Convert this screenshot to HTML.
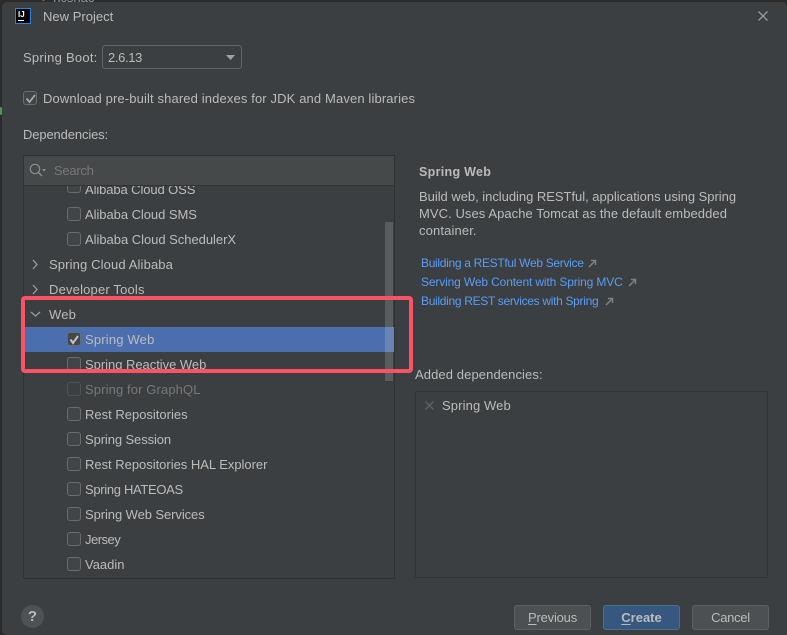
<!DOCTYPE html>
<html><head><meta charset="utf-8">
<style>
html,body{margin:0;padding:0}
body{width:787px;height:635px;overflow:hidden;background:#2b2b2b;position:relative;font-family:"Liberation Sans","Noto Sans CJK SC",sans-serif;font-size:13px;color:#bbbbbb}
#d{position:absolute;left:2px;top:2px;width:785px;height:633px;background:#3c3f41;border-radius:5px 5px 0 5px}
.t{position:absolute;white-space:nowrap;line-height:18px;height:18px}
.r{left:85px}
.c{position:absolute;left:67px;width:12px;height:12px;border:1px solid #6b6b6b;background:#414547;border-radius:3px}
.a{position:absolute;left:0;top:0}
.l{color:#589df6;left:421px;font-size:12px;letter-spacing:-.31px}
.b{position:absolute;top:605px;height:23px;border:1px solid #5e6060;background:#4c5052;border-radius:3px;text-align:center;line-height:23px;color:#bbb}
u{text-underline-offset:2px}
</style></head><body>
<div class="t" style="left:42px;top:-11px;color:#999">&gt; ncsnac</div>
<div style="position:absolute;left:0;top:107px;width:3px;height:8px;background:#4f9a4a;border-radius:0 4px 4px 0"></div>
<div id="d"></div>

<div style="position:absolute;left:15px;top:8px;width:14px;height:14px;background:#000;border:1px solid #1e88e5"></div>
<div style="position:absolute;left:18px;top:10px;color:#fff;font:bold 8px/9px 'Liberation Sans',sans-serif">IJ</div>
<div style="position:absolute;left:18px;top:20px;width:6px;height:1px;background:#fff"></div>
<div class="t" style="left:43px;top:8px;letter-spacing:.02px">New Project</div>
<svg class="a" width="787" height="40"><path d="M758.500 11.500l9 9M767.500 11.500l-9 9" stroke="#9a9c9e" stroke-width="1.300" fill="none"/></svg>

<div class="t" style="left:23px;top:49px;letter-spacing:.25px">Spring Boot:</div>
<div style="position:absolute;left:102px;top:45px;width:138px;height:22px;border:1px solid #646464;border-radius:3px;background:#3c3f41"></div>
<div class="t" style="left:108px;top:49px;letter-spacing:-.37px">2.6.13</div>
<svg class="a" width="787" height="80"><path d="M226 55h9l-4.500 5z" fill="#a0a2a4"/></svg>

<div class="c" style="left:23px;top:91px"></div>
<svg class="a" width="60" height="110"><path d="M26.500 98.500l3 3.500 5.500-7" stroke="#a9a9a9" stroke-width="1.800" fill="none"/></svg>
<div class="t" style="left:43px;top:90px;letter-spacing:.13px">Download pre-built shared indexes for JDK and Maven libraries</div>
<div class="t" style="left:23px;top:126px;letter-spacing:-.13px">Dependencies:</div>

<!-- list -->
<div style="position:absolute;left:23px;top:155px;width:370px;height:422px;border:1px solid #2f3234"></div>
<div style="position:absolute;left:24px;top:327px;width:370px;height:25px;background:#4b6eaf"></div>

<div class="c" style="top:179px"></div><div class="t r" style="top:181px;letter-spacing:-.1px">Alibaba Cloud OSS</div>
<div class="c" style="top:207px"></div><div class="t r" style="top:206px;letter-spacing:-.05px">Alibaba Cloud SMS</div>
<div class="c" style="top:232px"></div><div class="t r" style="top:231px;letter-spacing:-.03px">Alibaba Cloud SchedulerX</div>
<div class="t" style="left:49px;top:256px;letter-spacing:.13px">Spring Cloud Alibaba</div>
<div class="t" style="left:49px;top:281px;letter-spacing:.18px">Developer Tools</div>
<div class="t" style="left:49px;top:306px;letter-spacing:.18px">Web</div>
<div class="c" style="top:332px;background:#43494a"></div><div class="t r" style="top:331px;letter-spacing:.18px">Spring Web</div>
<div class="c" style="top:357px"></div><div class="t r" style="top:356px;letter-spacing:-.03px">Spring Reactive Web</div>
<div class="c" style="top:382px;border-color:#515354;background:#3c3f41"></div><div class="t r" style="top:381px;color:#777;letter-spacing:.12px">Spring for GraphQL</div>
<div class="c" style="top:407px"></div><div class="t r" style="top:406px">Rest Repositories</div>
<div class="c" style="top:432px"></div><div class="t r" style="top:431px;letter-spacing:-.1px">Spring Session</div>
<div class="c" style="top:457px"></div><div class="t r" style="top:456px;letter-spacing:-.02px">Rest Repositories HAL Explorer</div>
<div class="c" style="top:482px"></div><div class="t r" style="top:481px;letter-spacing:-.32px">Spring HATEOAS</div>
<div class="c" style="top:507px"></div><div class="t r" style="top:506px;letter-spacing:-.08px">Spring Web Services</div>
<div class="c" style="top:532px"></div><div class="t r" style="top:531px;letter-spacing:-.5px">Jersey</div>
<div class="c" style="top:557px"></div><div class="t r" style="top:556px">Vaadin</div>

<svg class="a" width="100" height="400"><path d="M33 260l4 4.500-4 4.500M33 285l4 4.500-4 4.500M31 312l4.500 4 4.500-4" stroke="#9a9c9e" stroke-width="1.300" fill="none"/><path d="M70.500 339.500l2.500 3.500 5-7" stroke="#c4c4c4" stroke-width="2" fill="none"/></svg>

<!-- search -->
<div style="position:absolute;left:24px;top:156px;width:370px;height:29px;background:#45494a;border-bottom:1px solid #323436"></div>
<svg class="a" width="60" height="190"><circle cx="35" cy="169" r="4.700" stroke="#8c8f91" stroke-width="1.200" fill="none"/><path d="M38.500 172.500l3.500 3.500" stroke="#8c8f91" stroke-width="1.400"/><path d="M42 169h4l-2 2.500z" fill="#8c8f91"/></svg>
<div class="t" style="left:54px;top:162px;color:#787878;letter-spacing:-.27px">Search</div>

<!-- scrollbar -->
<div style="position:absolute;left:385px;top:222px;width:8px;height:159px;background:#5a5c5e"></div>
<div style="position:absolute;left:385px;top:327px;width:9px;height:25px;background:#6b83b5"></div>

<!-- red box -->
<div style="position:absolute;left:21px;top:296px;width:384px;height:69px;border:4px solid #fb5365;border-radius:4px"></div>

<!-- right -->
<div class="t" style="left:419px;top:163px;font-weight:bold;font-size:12.5px;letter-spacing:.3px;color:#bbb">Spring Web</div>
<div class="t" style="left:419px;top:188px;letter-spacing:-.03px">Build web, including RESTful, applications using Spring</div>
<div class="t" style="left:419px;top:205px;letter-spacing:.07px">MVC. Uses Apache Tomcat as the default embedded</div>
<div class="t" style="left:419px;top:222px;letter-spacing:.13px">container.</div>
<div class="t l" style="top:254px">Building a RESTful Web Service</div>
<div class="t l" style="top:273px;letter-spacing:-.14px">Serving Web Content with Spring MVC</div>
<div class="t l" style="top:292px">Building REST services with Spring</div>
<svg class="a" width="787" height="320"><g stroke="#7d7f81" stroke-width="1.500" fill="none"><path d="M589 267l6-6M591 260.500h4.500v4.500"/><path d="M629 286l6-6M631 279.500h4.500v4.500"/><path d="M606 305l6-6M608 298.500h4.500v4.500"/></g></svg>
<div class="t" style="left:415px;top:366px;letter-spacing:.1px">Added dependencies:</div>
<div style="position:absolute;left:415px;top:391px;width:351px;height:185px;border:1px solid #323436"></div>
<svg class="a" width="460" height="420"><path d="M425.500 401.500l8 8M433.500 401.500l-8 8" stroke="#66686a" stroke-width="1.200" fill="none"/></svg>
<div class="t" style="left:442px;top:397px;letter-spacing:.12px">Spring Web</div>

<!-- bottom -->
<div style="position:absolute;left:21px;top:605px;width:23px;height:23px;border-radius:50%;background:#4f5254;color:#bbb;text-align:center;font:bold 15px/23px 'Liberation Sans',sans-serif">?</div>
<div class="b" style="left:514px;width:75px;letter-spacing:-.2px"><u>P</u>revious</div>
<div class="b" style="left:603px;width:75px;background:#365880;border-color:#4c708c;font-weight:bold;color:#bbb"><u>C</u>reate</div>
<div class="b" style="left:692px;width:75px;letter-spacing:-.3px">Cancel</div>
</body></html>
